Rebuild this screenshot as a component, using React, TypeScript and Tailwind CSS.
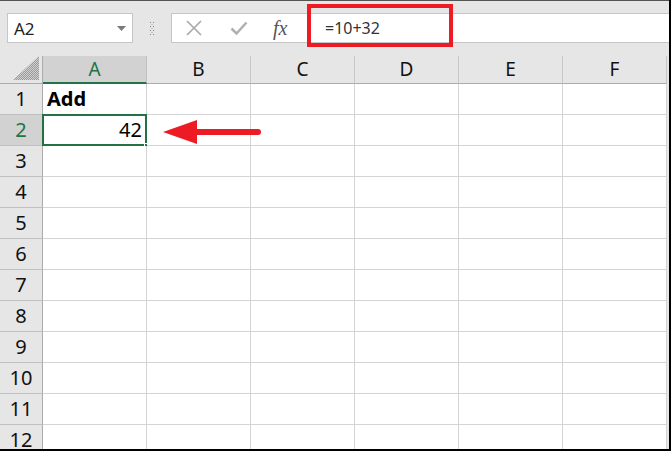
import React from "react";

const cols = ["A", "B", "C", "D", "E", "F"];
const rows = [1, 2, 3, 4, 5, 6, 7, 8, 9, 10, 11, 12];

export default function App() {
  return (
    <div
      className="relative w-[671px] h-[451px] overflow-hidden bg-[#e6e6e6] border-r-2 border-b-2 border-black"
      style={{ fontFamily: '"Noto Sans", "Open Sans", sans-serif' }}
    >
      {/* Toolbar */}
      <div className="h-[56px] flex items-start pt-[12px] pl-[7px] border-t border-[#555]">
        <div className="w-[126px] h-[30px] bg-white border border-[#c6c6c6] flex items-center justify-between pl-[6px] pr-[6px]">
          <span className="text-[17px] text-[#222] leading-none">A2</span>
          <svg width="9" height="5" viewBox="0 0 9 5">
            <path d="M0 0 L9 0 L4.5 5 Z" fill="#7a7a7a" />
          </svg>
        </div>
        <div className="w-[38px] h-[30px] flex items-center justify-center">
          <svg width="5" height="13" viewBox="0 0 5 13">
            {[0, 4, 8, 12].map((y) => (
              <g key={y}>
                <rect x="0" y={y} width="1" height="1" fill="#888" />
                <rect x="3" y={y} width="1" height="1" fill="#888" />
                {y < 12 && <rect x="1.5" y={y + 2} width="1" height="1" fill="#aaa" />}
              </g>
            ))}
          </svg>
        </div>
        <div className="flex-1 h-[30px] bg-white border border-[#c6c6c6] border-r-0 flex items-center">
          <div className="w-[136px] flex items-center h-full">
            <svg width="18" height="18" viewBox="0 0 18 18" className="ml-[13px]">
              <path d="M2 2 L16 16 M16 2 L2 16" stroke="#a8a8a8" strokeWidth="1.6" />
            </svg>
            <svg width="18" height="16" viewBox="0 0 18 16" className="ml-[27px]">
              <path d="M1.5 8.5 L6.5 13.5 L16.5 2.5" stroke="#b0b0b0" strokeWidth="2.5" fill="none" />
            </svg>
            <span
              className="ml-[25px] text-[20px] italic text-[#555] leading-none"
              style={{ fontFamily: '"Liberation Serif", "DejaVu Serif", serif' }}
            >
              fx
            </span>
          </div>
          <div className="pl-[17px] text-[16px] text-[#333] leading-none">=10+32</div>
        </div>
      </div>

      {/* Red highlight on formula */}
      <div className="absolute left-[307px] top-[4px] w-[146px] h-[43px] border-[4px] border-[#ed1c24]" />

      {/* Grid */}
      <div
        className="grid"
        style={{ gridTemplateColumns: "43px repeat(6, 104px)", gridTemplateRows: "28px repeat(12, 31px)" }}
      >
        {/* corner */}
        <div className="bg-[#e6e6e6] border-r border-b border-[#ababab] flex items-end justify-end pr-[3px] pb-[3px]">
          <svg width="26" height="24" viewBox="0 0 26 24">
            <defs>
              <pattern id="hatch" width="2" height="2" patternUnits="userSpaceOnUse">
                <rect width="2" height="2" fill="#d0d0d0" />
                <rect width="1" height="1" fill="#9a9a9a" />
                <rect x="1" y="1" width="1" height="1" fill="#9a9a9a" />
              </pattern>
            </defs>
            <path d="M26 0 L26 24 L0 24 Z" fill="url(#hatch)" />
          </svg>
        </div>
        {cols.map((c) =>
          c === "A" ? (
            <div
              key={c}
              className="bg-[#d2d2d2] border-r border-[#c0c0c0] border-b-2 border-b-[#217346] flex items-center justify-center text-[19px] text-[#217346] leading-none"
            >
              {c}
            </div>
          ) : (
            <div
              key={c}
              className="bg-[#e6e6e6] border-r border-b border-[#c6c6c6] border-b-[#ababab] flex items-center justify-center text-[19px] text-[#111] leading-none"
            >
              {c}
            </div>
          )
        )}
        {rows.map((r) => (
          <React.Fragment key={r}>
            <div
              className={
                "border-r border-b border-[#c0c0c0] border-r-[#ababab] flex items-center justify-center text-[20px] leading-none " +
                (r === 2 ? "bg-[#d2d2d2] text-[#217346]" : "bg-[#e6e6e6] text-[#111]")
              }
            >
              {r}
            </div>
            {cols.map((c) => (
              <div key={c} className="relative bg-white border-r border-b border-[#d4d4d4] flex items-center">
                {r === 1 && c === "A" && (
                  <span className="pl-[4px] text-[20px] font-bold text-black leading-none">Add</span>
                )}
                {r === 2 && c === "A" && (
                  <>
                    <span className="w-full text-right pr-[4px] text-[20px] text-black leading-none">42</span>
                    <div className="absolute left-[-1px] top-[-1px] right-[-1px] bottom-[-1px] border-2 border-[#217346]" />
                    <div className="absolute right-[-4px] bottom-[-4px] w-[6px] h-[6px] bg-[#217346] border border-white" />
                  </>
                )}
              </div>
            ))}
          </React.Fragment>
        ))}
      </div>

      {/* Red arrow */}
      <svg className="absolute left-[160px] top-[117px]" width="104" height="30" viewBox="0 0 104 30">
        <path d="M3 15 L37 3 L37 27 Z" fill="#ed1c24" />
        <path d="M35 15 L98 15" stroke="#ed1c24" strokeWidth="6" strokeLinecap="round" />
      </svg>
    </div>
  );
}
